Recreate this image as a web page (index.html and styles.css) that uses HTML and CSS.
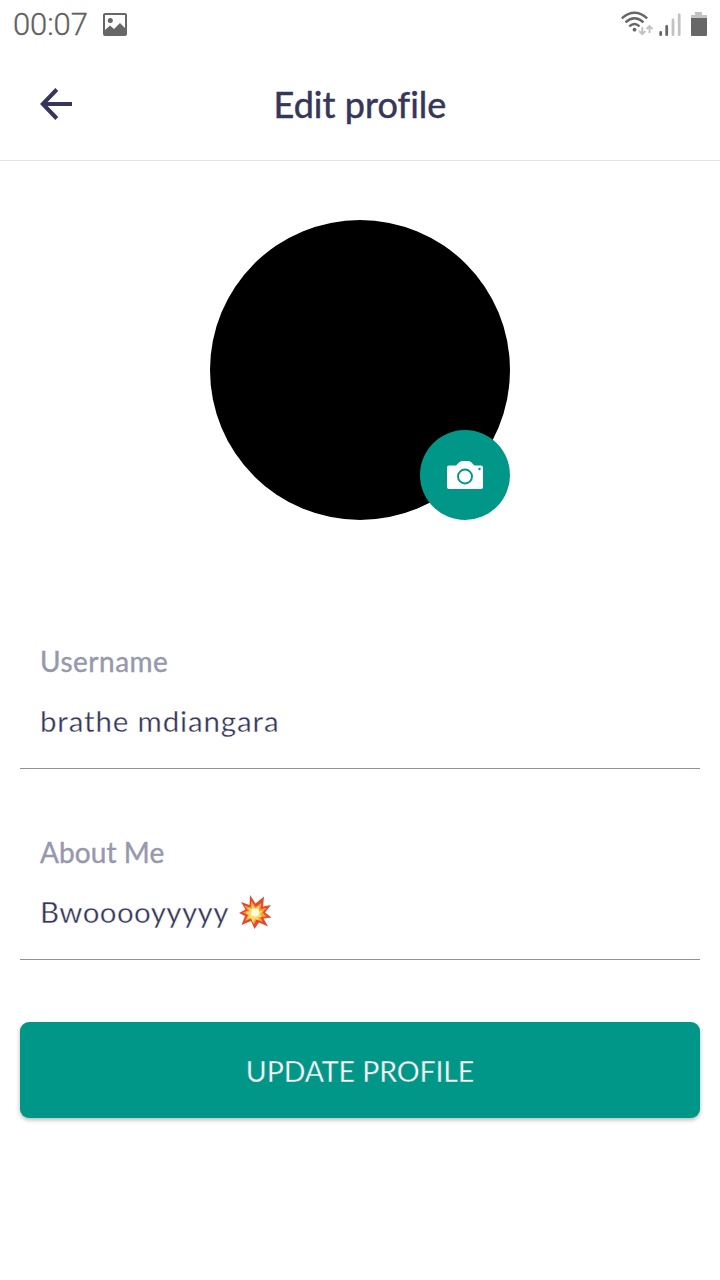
FILE: index.html
```html
<!DOCTYPE html>
<html lang="en">
<head>
<meta charset="utf-8">
<title>Edit profile</title>
<link rel="stylesheet" href="styles.css">
</head>
<body>
<div class="status-bar">
  <span class="clock">00:07</span>
  <svg class="gallery-icon" width="24" height="23" viewBox="0 0 24 23"><path fill="#676767" fill-rule="evenodd" d="M2 0h20q2 0 2 2v19q0 2-2 2H2q-2 0-2-2V2q0-2 2-2zM2 2v15l5-4.500 4 3.500 6-6 5 5V2z"/><circle cx="7.300" cy="7.400" r="2.500" fill="#676767"/></svg>
  <svg class="signals" width="90" height="30" viewBox="0 0 90 30">
    <g fill="none" stroke="#676767" stroke-width="2.400"><path d="M1.800 10.300Q14.500-.8 27.200 10.300"/><path d="M5.500 14.300Q14.500 6.300 23.500 14.300"/><path d="M9.300 18.300Q14.500 13.600 19.500 18.300"/></g>
    <circle cx="14.500" cy="21.700" r="1.900" fill="#676767"/>
    <g fill="none" stroke="#c2c2c2" stroke-width="1.900"><path d="M22.300 19v7M19.200 23l3.100 3.100 3.100-3.100M29.500 25v-7M26.400 21.200l3.100-3.100 3.100 3.100"/></g>
    <g stroke-width="2.800" stroke-linecap="round"><path stroke="#676767" d="M40.700 24.500v2.200M46.700 18.500v8.200"/><path stroke="#c2c2c2" d="M53 12v14.700M59.200 7v19.700"/></g>
    <path fill="#c2c2c2" d="M75 4h7v3h5v4H71V7h4z"/><path fill="#676767" d="M71 10h16v17q0 1-1 1H72q-1 0-1-1z"/>
  </svg>
</div>
<header class="header">
  <svg class="back" width="34" height="34" viewBox="0 0 34 34"><path d="M33 17H4M17.800 2.500L3.800 17l14 14.500" fill="none" stroke="#35365a" stroke-width="4"/></svg>
  <h1 class="title">Edit profile</h1>
</header>
<main class="content">
  <div class="avatar">
    <div class="camera">
      <svg width="36" height="28" viewBox="0 0 36 28"><path fill="#fff" d="M2 4.500h7l3-3Q13.300 0 15 0h6.500Q23 0 24.500 1.500l3 3H34q2 0 2 2V26q0 2-2 2H2q-2 0-2-2V6.500q0-2 2-2z"/><circle cx="18" cy="15.500" r="7" fill="none" stroke="#019788" stroke-width="1.900"/><circle cx="32.500" cy="8" r="1.200" fill="#019788"/></svg>
    </div>
  </div>
  <section class="field">
    <div class="label label-username">Username</div>
    <div class="value value-username">brathe mdiangara</div>
  </section>
  <section class="field">
    <div class="label label-about">About Me</div>
    <div class="value value-about"><span>Bwooooyyyyy</span>
      <svg class="burst" width="34" height="34" viewBox="0 0 34 34"><path fill="#e4482d" d="M12 0l5.500 8.500L26 1.500l-1 10 8-1.500-6 7.500 6.500 5-8 1 4.500 8-9-4-4.500 6.500-3.500-8-9.500 4 3.500-9L1 18l6.500-3.500L3 7l8.500 3z"/><path fill="#f9a137" d="M13.500 6l4 6 6-4-1 6 6-1-4 4.500 4 4-6 .5 2 5-6-2.500-2.500 5-3-6-6 2.500 3-6-5-2.500 5-2-4-5 6.500 2z"/><path fill="#ffdc68" d="M14 10l3 4 4-3 0 5 4 0-3 3 2 3-4 0 1 3-4-1-2 4-2-5-4 1 2-4-3-2 4-2-2-3 4 1z"/><circle cx="17" cy="17.500" r="4" fill="#fff9df"/></svg>
    </div>
  </section>
  <button class="update" type="button"><span>UPDATE PROFILE</span></button>
</main>
</body>
</html>
```
FILE: styles.css
```css
* { box-sizing: border-box; }
body { margin: 0; width: 720px; height: 1280px; background: #fff; color: #35365a; font-family: Lato, sans-serif; overflow: hidden; }
svg { display: block; flex: none; }
.status-bar { height: 48px; display: flex; align-items: flex-start; padding: 0 10px 0 13px; }
.clock { width: 90px; font: 31px/50px Roboto, sans-serif; font-weight: 300; color: #606060; -webkit-text-stroke: .3px #606060; letter-spacing: -.1px; white-space: nowrap; }
.gallery-icon { margin-top: 13px; }
.signals { margin: 8px 0 0 auto; }
.header { height: 113px; border-bottom: 1px solid #e3e3e3; display: grid; grid-template-columns: 72px 1fr 72px; align-items: center; }
.back { margin: 0 0 1px 39px; }
.title { margin: 0; text-align: center; font-size: 36px; line-height: 46px; font-weight: 400; letter-spacing: .05px; -webkit-text-stroke: .5px #35365a; }
.content { padding: 59px 20px 0; }
.avatar { width: 300px; height: 300px; margin: 0 auto; border-radius: 50%; background: #000; display: flex; align-items: flex-end; justify-content: flex-end; }
.camera { width: 90px; height: 90px; border-radius: 50%; background: #019788; display: flex; align-items: center; justify-content: center; }
.field { height: 131px; border-bottom: 1px solid #9192a0; padding: 1px 20px 0; margin-top: 60px; }
.avatar + .field { margin-top: 118px; }
.label { height: 44px; line-height: 44px; font-size: 28px; color: #9798ae; -webkit-text-stroke: .4px #9798ae; }
.label-username { letter-spacing: .5px; }
.label-about { letter-spacing: .1px; }
.value { height: 44px; line-height: 44px; margin-top: 16px; font-size: 29.5px; display: flex; align-items: center; white-space: nowrap; -webkit-text-stroke: .35px #fff; }
.value-username { letter-spacing: .85px; }
.value-about { letter-spacing: .4px; }
.burst { margin-left: 9px; }
.update { display: block; width: 680px; height: 96px; margin-top: 62px; padding: 1px 0 0; border: 0; border-radius: 9px; background: #019788; color: #fff; font: 28.5px/40px Lato, sans-serif; letter-spacing: -.1px; -webkit-text-stroke: .35px #019788; box-shadow: 0 2px 4px rgba(0,0,0,.28); }
```
